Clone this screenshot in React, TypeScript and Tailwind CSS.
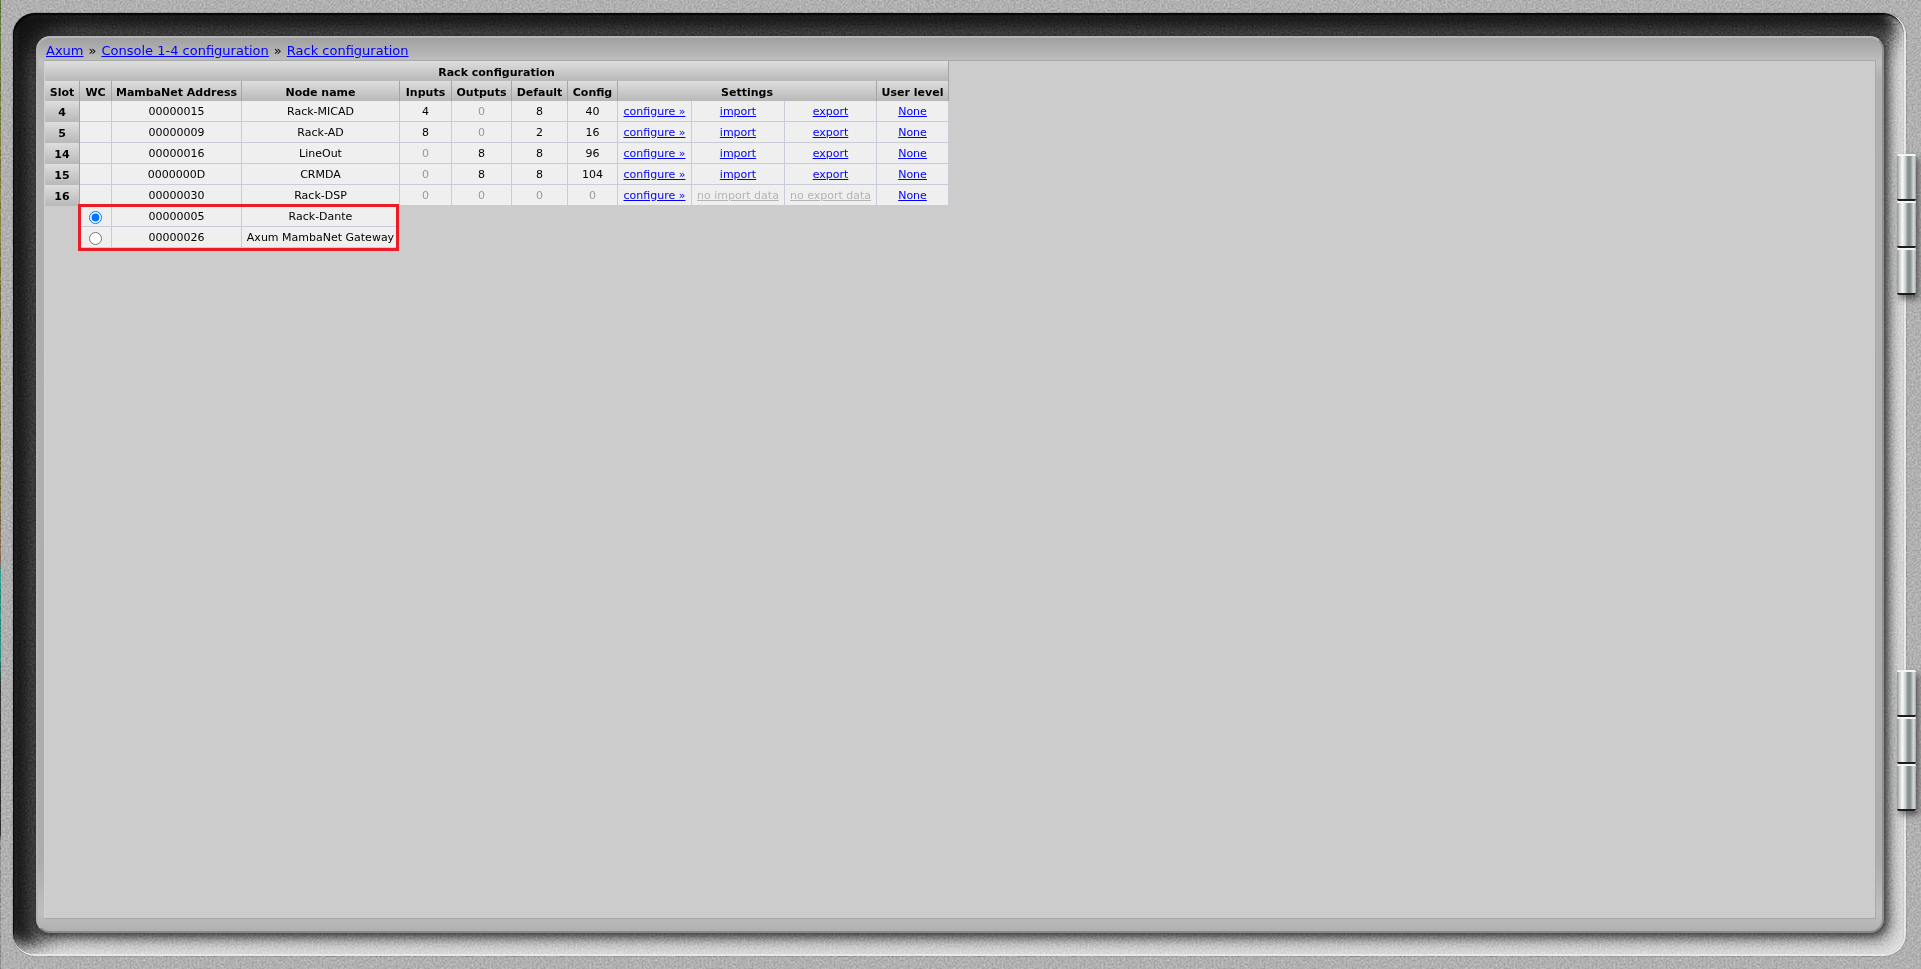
import React from 'react';

interface RackSlot {
  slot: number;
  address: string;
  name: string;
  inputs: number;
  outputs: number;
  defaults: number;
  config: number;
  hasData: boolean;
}

interface GatewayNode {
  address: string;
  name: string;
}

const slots: RackSlot[] = [
  { slot: 4, address: '00000015', name: 'Rack-MICAD', inputs: 4, outputs: 0, defaults: 8, config: 40, hasData: true },
  { slot: 5, address: '00000009', name: 'Rack-AD', inputs: 8, outputs: 0, defaults: 2, config: 16, hasData: true },
  { slot: 14, address: '00000016', name: 'LineOut', inputs: 0, outputs: 8, defaults: 8, config: 96, hasData: true },
  { slot: 15, address: '0000000D', name: 'CRMDA', inputs: 0, outputs: 8, defaults: 8, config: 104, hasData: true },
  { slot: 16, address: '00000030', name: 'Rack-DSP', inputs: 0, outputs: 0, defaults: 0, config: 0, hasData: false },
];

const gateways: GatewayNode[] = [
  { address: '00000005', name: 'Rack-Dante' },
  { address: '00000026', name: 'Axum MambaNet Gateway' },
];

const headClass = 'h-5 p-0 pt-[3px] border-r border-[#a4a4a4] bg-linear-to-b from-[#dedede] to-[#b8b8b8] font-bold';
const cellClass = 'h-[21px] p-0 pt-px border-r border-b border-[#c8ccd6] bg-[#efefef]';
const linkClass = 'text-[#0000ff] underline';

const CountCell = ({ value }: { value: number }) => (
  <td className={`${cellClass} ${value === 0 ? 'text-[#999999]' : ''}`}>{value}</td>
);

const Grain = () => (
  <svg className="pointer-events-none absolute inset-0 h-full w-full opacity-30 mix-blend-overlay" aria-hidden="true">
    <filter id="grain" x="0" y="0" width="100%" height="100%" colorInterpolationFilters="sRGB">
      <feTurbulence type="fractalNoise" baseFrequency="0.5" numOctaves="2" seed="4" />
      <feColorMatrix values="1.4 0 0 0 -0.2  1.4 0 0 0 -0.2  1.4 0 0 0 -0.2  0 0 0 0 1" />
    </filter>
    <rect width="100%" height="100%" filter="url(#grain)" />
  </svg>
);

const Hinge = ({ className }: { className: string }) => (
  <div className={`absolute right-[5px] flex w-[19px] flex-col shadow-[3px_4px_6px_rgba(0,0,0,0.5)] ${className}`}>
    {[0, 1, 2].map(part => (
      <div
        key={part}
        className="h-[47px] rounded-[2px] border-t-2 border-b-2 border-t-[#f4f4f4] border-b-[#1c1c1c] bg-[linear-gradient(to_right,#8f9494,#c4c8c8_12%,#fafafa_28%,#d2d6d6_42%,#858d8f_58%,#8a9294_70%,#d8dcdc_88%,#a0a4a4)]"
      />
    ))}
  </div>
);

const RackTable = () => (
  <div className="relative w-[904px]">
    <table className="w-full table-fixed border-separate border-spacing-0 text-center text-[11px] leading-[14px]">
      <colgroup>
        <col className="w-[35px]" />
        <col className="w-8" />
        <col className="w-[130px]" />
        <col className="w-[158px]" />
        <col className="w-[52px]" />
        <col className="w-[60px]" />
        <col className="w-14" />
        <col className="w-[50px]" />
        <col className="w-[74px]" />
        <col className="w-[93px]" />
        <col className="w-[92px]" />
        <col className="w-[72px]" />
      </colgroup>
      <thead>
        <tr>
          <th colSpan={12} className={headClass}>Rack configuration</th>
        </tr>
        <tr>
          <th className={headClass}>Slot</th>
          <th className={headClass}>WC</th>
          <th className={headClass}>MambaNet Address</th>
          <th className={headClass}>Node name</th>
          <th className={headClass}>Inputs</th>
          <th className={headClass}>Outputs</th>
          <th className={headClass}>Default</th>
          <th className={headClass}>Config</th>
          <th colSpan={3} className={headClass}>Settings</th>
          <th className={headClass}>User level</th>
        </tr>
      </thead>
      <tbody>
        {slots.map(item => (
          <tr key={item.slot}>
            <th scope="row" className={headClass}>{item.slot}</th>
            <td className={cellClass}></td>
            <td className={cellClass}>{item.address}</td>
            <td className={cellClass}>{item.name}</td>
            <CountCell value={item.inputs} />
            <CountCell value={item.outputs} />
            <CountCell value={item.defaults} />
            <CountCell value={item.config} />
            <td className={cellClass}><a href="#configure" className={linkClass}>configure »</a></td>
            <td className={cellClass}>
              {item.hasData
                ? <a href="#import" className={linkClass}>import</a>
                : <span className="text-[#b4b4b4] underline">no import data</span>}
            </td>
            <td className={cellClass}>
              {item.hasData
                ? <a href="#export" className={linkClass}>export</a>
                : <span className="text-[#b4b4b4] underline">no export data</span>}
            </td>
            <td className={cellClass}><a href="#level" className={linkClass}>None</a></td>
          </tr>
        ))}
        {gateways.map((node, index) => (
          <tr key={node.address}>
            <td></td>
            <td className={cellClass}>
              <input
                type="radio"
                name="wordclock"
                aria-label={node.name}
                defaultChecked={index === 0}
                className="mx-auto mt-0.5 block h-[13px] w-[13px]"
              />
            </td>
            <td className={cellClass}>{node.address}</td>
            <td className={cellClass}>{node.name}</td>
          </tr>
        ))}
      </tbody>
    </table>
    <div className="pointer-events-none absolute -bottom-[3px] left-[33px] h-[47px] w-[321px] border-3 border-[#ed1c24]"></div>
  </div>
);

const App: React.FC = () => {
  return (
    <div className="relative flex h-screen min-h-[400px] bg-[#b0b0b0] font-['Verdana','DejaVu_Sans',sans-serif] text-black">
      <div className="w-px bg-[linear-gradient(to_bottom,#5c7a34,#8a8040_20%,#6a6a30_45%,#8a7050_58%,#2a9a8a_59%,#2a8a80_68%,#303030_71%,#303030_86%,#909090_87%)]"></div>
      <div className="flex flex-1 py-[13px] pr-[15px] pl-3">
        <div className="flex flex-1 rounded-[22px] border-r-2 border-b-2 border-[#e8e8e8] bg-[#a8a8a8] pt-[23px] pr-5 pb-[21px] pl-[23px] shadow-[inset_1px_2px_2px_#000,inset_-8px_-8px_14px_rgba(235,235,235,0.85),inset_26px_26px_28px_rgba(0,0,0,0.9),0_0_2px_#707070]">
          <div className="relative z-10 flex flex-1 flex-col rounded-[14px] border-2 border-t-[#b8b8b8] border-r-[#909090] border-b-[#888888] border-l-[#b4b4b4] bg-[#b0b0b0] bg-[linear-gradient(to_bottom,#a0a0a0,#c0c0c0_24px,#b0b0b0_40px,#acacac_92%,#bebebe_98%,#b0b0b0)] px-1.5 pb-3 shadow-[2px_2px_10px_1px_rgba(0,0,0,0.75)]">
            <nav className="flex h-[22px] gap-[5px] pl-0.5 text-[13px] leading-[26px]">
              <a href="#axum" className={linkClass}>Axum</a>
              <span>»</span>
              <a href="#console" className={linkClass}>Console 1-4 configuration</a>
              <span>»</span>
              <a href="#rack" className={linkClass}>Rack configuration</a>
            </nav>
            <main className="flex-1 border border-[#a8a8a8] border-l-[#d0d0d0] bg-[#cccccc]">
              <RackTable />
            </main>
          </div>
        </div>
      </div>
      <Grain />
      <Hinge className="top-[154px]" />
      <Hinge className="bottom-[158px]" />
    </div>
  );
};

export default App;
